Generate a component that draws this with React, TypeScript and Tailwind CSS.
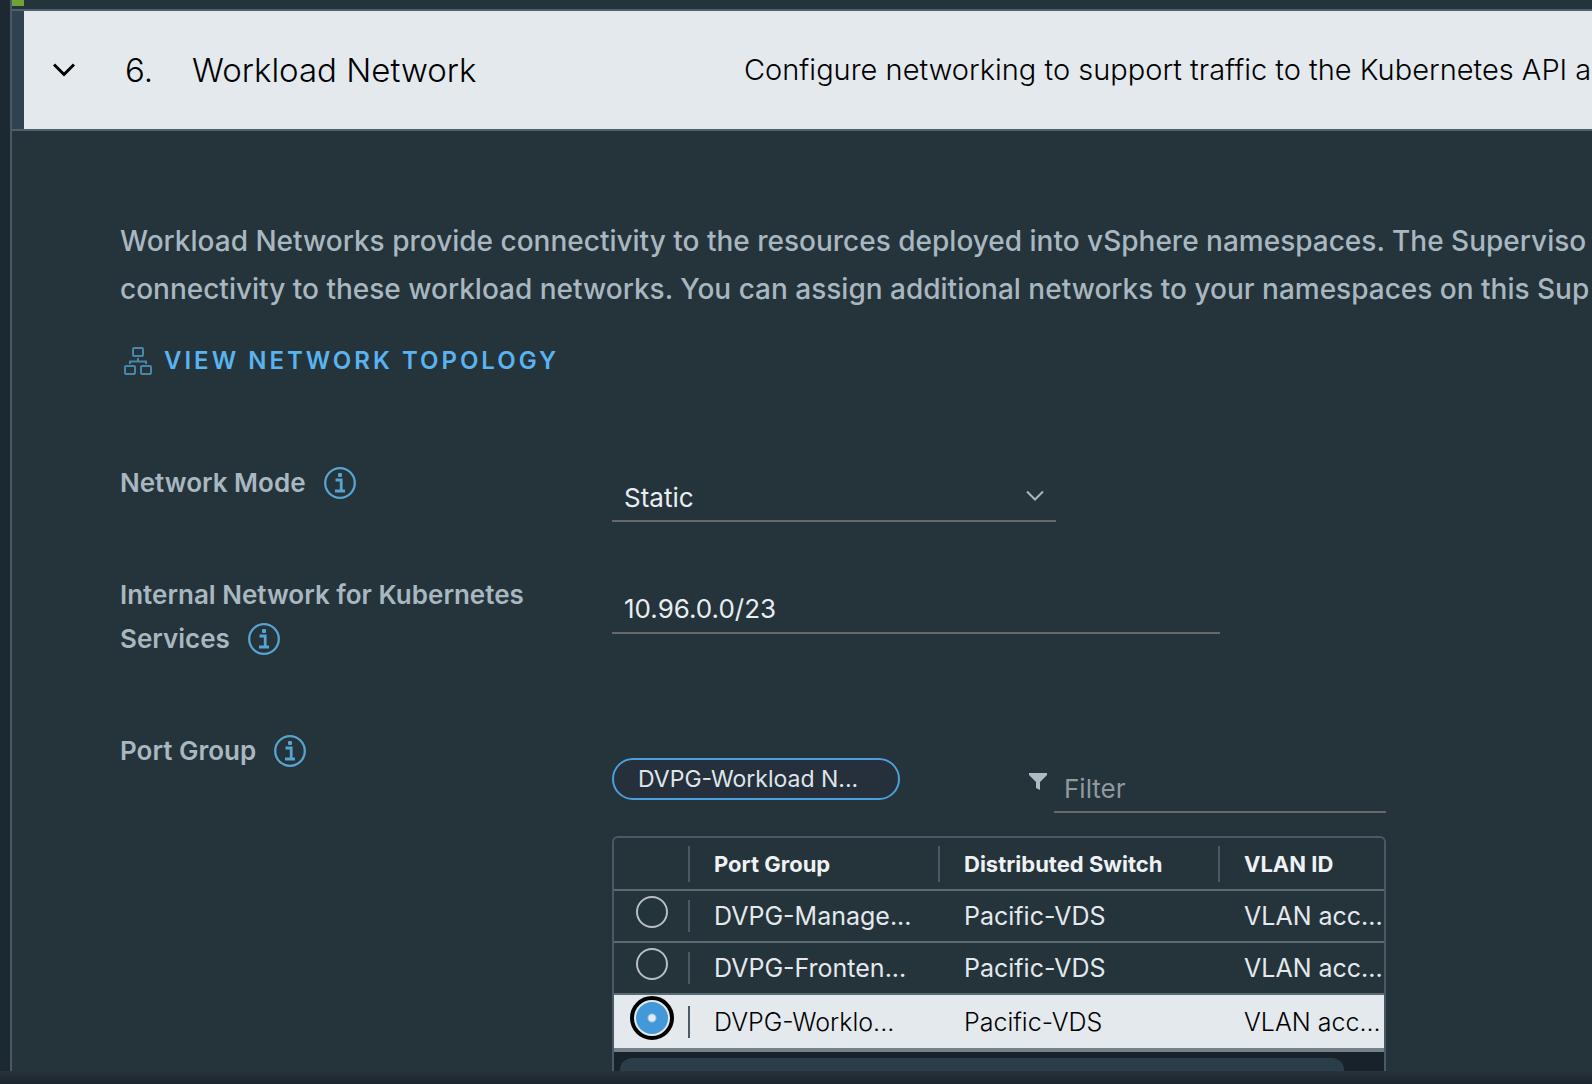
import React from "react";

function InfoButton({ label }: { label: string }) {
  return (
    <button type="button" aria-label={label} className="size-8 shrink-0 text-[#57a4cf]">
      <svg viewBox="0 0 32 32" className="size-8" fill="none" aria-hidden="true">
        <circle cx="16" cy="16" r="14.8" stroke="currentColor" strokeWidth="2.3" />
        <rect x="14" y="6" width="4" height="4" rx="1" fill="currentColor" />
        <path d="M11.5 13H17.2V23M11 24H21" stroke="currentColor" strokeWidth="2.8" />
      </svg>
    </button>
  );
}

function TopologyIcon() {
  return (
    <svg viewBox="0 0 28 28" className="size-7" fill="none" stroke="#4a86a8" strokeWidth="2" aria-hidden="true">
      <rect x="9" y="1" width="10" height="8" rx="1" />
      <rect x="1" y="19" width="10" height="8" rx="1" />
      <rect x="17" y="19" width="10" height="8" rx="1" />
      <path d="M14 11V14M6 17V14.5H22V17" />
    </svg>
  );
}

const rows = [
  { group: "DVPG-Manage...", dvs: "Pacific-VDS", vlan: "VLAN acc...", selected: false },
  { group: "DVPG-Fronten...", dvs: "Pacific-VDS", vlan: "VLAN acc...", selected: false },
  { group: "DVPG-Worklo...", dvs: "Pacific-VDS", vlan: "VLAN acc...", selected: true },
];

export default function App() {
  return (
    <div className="flex h-screen flex-col overflow-hidden bg-[#25333a] font-['Inter','Noto_Sans',sans-serif] text-[#a9b7c0]">
      <div className="flex min-h-0 flex-1 overflow-hidden">
        <div className="w-3 shrink-0 border-r-2 border-[#4a5964] bg-[#1d2932]" />
        <main className="min-w-0 flex-1">
          <div className="h-[9px]">
            <div className="h-1.5 w-3 bg-[#6fa338]" />
          </div>

          <section>
            <header className="flex h-[122px] items-center overflow-hidden border-y-2 border-[#52606b] bg-[#e4e9ed] whitespace-nowrap text-black">
              <div className="w-3 shrink-0 self-stretch bg-[#304250]" />
              <button type="button" aria-label="Collapse section" className="ml-[29px] shrink-0">
                <svg viewBox="0 0 22 16" className="h-4 w-[22px]" fill="none" stroke="black" strokeWidth="3" aria-hidden="true">
                  <path d="M1 2.5L11 12.5L21 2.5" />
                </svg>
              </button>
              <h2 className="ml-[50px] flex w-[619px] shrink-0 text-[33px] leading-10 font-light">
                <span className="w-[67px]">6.</span>
                <span>Workload Network</span>
              </h2>
              <p className="text-[29px] leading-10 font-light">
                Configure networking to support traffic to the Kubernetes API a
              </p>
            </header>

            <div className="pl-[108px]">
              <p className="mt-[86px] overflow-hidden text-[28px] leading-[48px] font-medium whitespace-nowrap">
                Workload Networks provide connectivity to the resources deployed into vSphere namespaces. The Superviso
                <br />
                connectivity to these workload networks. You can assign additional networks to your namespaces on this Sup
              </p>

              <a href="#topology" className="mt-6 ml-1 flex w-fit items-center gap-3 text-[24px] leading-12 font-semibold tracking-[3px] text-[#5ab3f0]">
                <TopologyIcon />
                VIEW NETWORK TOPOLOGY
              </a>

              <form className="mt-[76px] text-[26px] leading-11">
                <div className="flex items-start pb-[51px]">
                  <div className="flex w-[492px] shrink-0 items-center gap-[18px] font-semibold">
                    <label htmlFor="mode">Network Mode</label>
                    <InfoButton label="About network mode" />
                  </div>
                  <div className="relative mt-[17px] w-[444px] border-b-2 border-[#666767]">
                    <select id="mode" defaultValue="Static" className="block h-[42px] w-full appearance-none bg-transparent px-3 pb-0.5 leading-9 text-[#e8edf1]">
                      <option>Static</option>
                      <option>DHCP</option>
                    </select>
                    <svg viewBox="0 0 18 12" className="pointer-events-none absolute top-3 right-3 h-3 w-[18px]" fill="none" stroke="#aeb5b9" strokeWidth="2" aria-hidden="true">
                      <path d="M1 1.5L9 9.5L17 1.5" />
                    </svg>
                  </div>
                </div>

                <div className="flex items-start pb-[68px]">
                  <div className="w-[492px] shrink-0 font-semibold">
                    <label htmlFor="cidr" className="block">Internal Network for Kubernetes</label>
                    <div className="flex items-center gap-[18px]">
                      <label htmlFor="cidr">Services</label>
                      <InfoButton label="About internal network" />
                    </div>
                  </div>
                  <input
                    id="cidr"
                    defaultValue="10.96.0.0/23"
                    className="mt-[17px] h-11 w-[608px] border-b-2 border-[#666767] bg-transparent px-3 pb-1 text-[#e8edf1] outline-none"
                  />
                </div>

                <div className="flex items-start">
                  <div className="flex w-[492px] shrink-0 items-center gap-[18px] font-semibold">
                    <span>Port Group</span>
                    <InfoButton label="About port group" />
                  </div>
                  <div className="w-[774px] pt-[29px]">
                    <div className="flex h-[78px] items-start justify-between">
                      <span className="flex h-[42px] w-72 items-center rounded-full border-2 border-[#4aa0dc] bg-[#262f3c] pl-6 text-[23px] whitespace-nowrap text-[#dfe6ea]">
                        DVPG-Workload N...
                      </span>
                      <div className="flex items-start gap-[6px]">
                        <svg viewBox="0 0 20 18" className="mt-[15px] h-[18px] w-5" fill="#adbbc4" aria-hidden="true">
                          <path d="M1 0H19V2L12 9V17L8 15V9L1 2Z" />
                        </svg>
                        <input
                          aria-label="Filter"
                          placeholder="Filter"
                          className="mt-[11px] h-11 w-[332px] border-b-2 border-[#6c6769] bg-transparent px-[10px] pb-0.5 outline-none placeholder:text-[#8f9a9f]"
                        />
                      </div>
                    </div>

                    <div className="overflow-hidden rounded-t-md border-2 border-b-0 border-[#4a5964]">
                      <table className="w-full table-fixed border-collapse text-left text-[25px] whitespace-nowrap">
                        <thead>
                          <tr className="h-[52px] border-b-2 border-[#5b6b74] text-[22px] text-[#eef2f5]">
                            <th className="w-[74px] p-0" aria-label="Select" />
                            {["Port Group", "Distributed Switch"].map((h, i) => (
                              <th key={h} scope="col" className={i === 0 ? "w-[250px] p-0" : "w-[280px] p-0"}>
                                <div className="border-l-2 border-[#4a5964] pl-6 leading-9 font-bold">{h}</div>
                              </th>
                            ))}
                            <th scope="col" className="p-0">
                              <div className="border-l-2 border-[#4a5964] pl-6 leading-9 font-bold">VLAN ID</div>
                            </th>
                          </tr>
                        </thead>
                        <tbody>
                          {rows.map((r) => (
                            <tr
                              key={r.group}
                              className={
                                r.selected
                                  ? "h-14 border-b-4 border-[#74828a] bg-[#e4e9ed] font-light text-black"
                                  : "h-[52px] border-b-2 border-[#5b6b74] text-[#e3e9ed]"
                              }
                            >
                              <td className="p-0 pl-0.5 text-center leading-none">
                                <input
                                  type="radio"
                                  name="portgroup"
                                  aria-label={r.group}
                                  defaultChecked={r.selected}
                                  className="mb-2 size-8 appearance-none rounded-full border-2 border-[#b6bec3] align-middle checked:border-0 checked:bg-[radial-gradient(circle,#e4e9ed_3px,#4298d8_5px)] checked:outline-4 checked:outline-offset-2 checked:outline-black"
                                />
                              </td>
                              <td className="p-0">
                                <div className="flex items-center">
                                  <span className="h-8 w-0.5 bg-[#4a5964]" />
                                  <span className="pl-6 leading-10">{r.group}</span>
                                </div>
                              </td>
                              <td className="p-0 pl-[26px] leading-10">{r.dvs}</td>
                              <td className="p-0 pl-[26px] leading-10">{r.vlan}</td>
                            </tr>
                          ))}
                        </tbody>
                      </table>
                      <div className="h-10 bg-[#18222a] pt-1.5 pl-1.5">
                        <div className="h-6 w-[724px] rounded-t-xl bg-[#2c3d4a]" />
                      </div>
                    </div>
                  </div>
                </div>
              </form>
            </div>
          </section>
        </main>
      </div>
      <footer className="h-[13px] shrink-0 bg-linear-to-b from-[#27323a] to-[#1b262e]" />
    </div>
  );
}
